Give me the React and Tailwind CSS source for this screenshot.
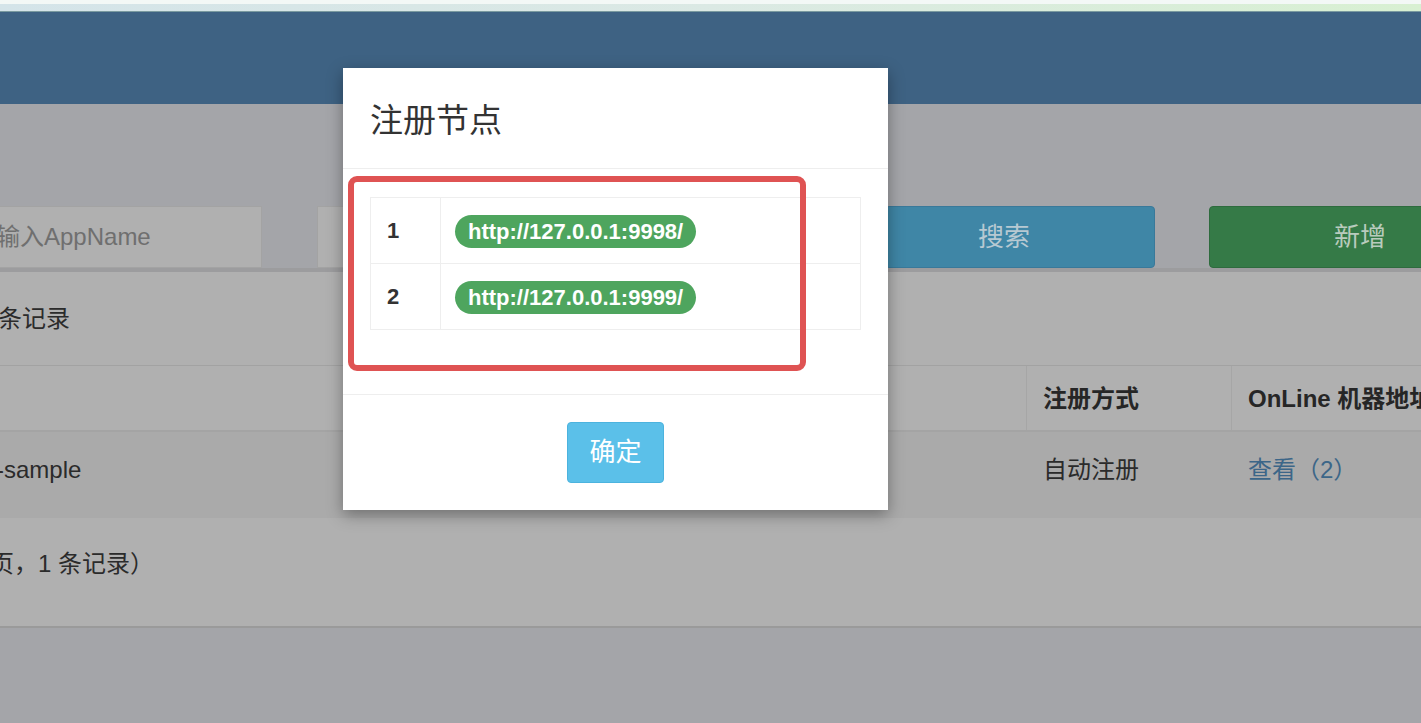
import React from "react";

const FONT = { fontFamily: '"Liberation Sans", "Noto Sans CJK SC", sans-serif' };

const nodes = [
  { id: 1, url: "http://127.0.0.1:9998/" },
  { id: 2, url: "http://127.0.0.1:9999/" },
];

const RegistryModal = () => (
  <div className="absolute left-[343px] top-[68px] w-[545px] h-[442px] bg-white shadow-[0_5px_15px_rgba(0,0,0,0.35)] flex flex-col">
    {/* header */}
    <div className="h-[101px] border-b border-[#eeeeee] flex items-center px-[27px]">
      <h4 className="text-[33px] text-[#333333] font-normal leading-none mt-[4px]">注册节点</h4>
    </div>

    {/* body */}
    <div className="h-[226px] px-[27px] pt-[28px] border-b border-[#eeeeee]">
      <table className="w-[491px] border-collapse border border-[#eeeeee]">
        <tbody>
          {nodes.map((n) => (
            <tr key={n.id} className="h-[66px]">
              <td className="w-[70px] border border-[#eeeeee] pl-[16px] text-[22px] font-bold text-[#333333]">
                {n.id}
              </td>
              <td className="border border-[#eeeeee] pl-[14px]">
                <span className="inline-flex items-center h-[33px] mt-[2px] px-[13px] rounded-full bg-[#4ea55e] text-white text-[22px] font-bold">
                  {n.url}
                </span>
              </td>
            </tr>
          ))}
        </tbody>
      </table>
    </div>

    {/* footer */}
    <div className="flex-1 flex justify-center pt-[27px]">
      <button className="w-[97px] h-[61px] rounded-[4px] bg-[#5bc0e9] border border-[#4cb3de] text-white text-[26px]">
        确定
      </button>
    </div>

    {/* red highlight drawn on the screenshot */}
    <div className="absolute left-[5px] top-[108px] w-[458px] h-[195px] border-[6px] border-[#df5353] rounded-[9px]" />
  </div>
);

export default function App() {
  return (
    <div className="relative w-[1421px] h-[723px] overflow-hidden bg-[#a4a5a9]" style={FONT}>
      {/* top strip */}
      <div className="h-[12px] bg-gradient-to-r from-[#d4e4e9] via-[#dbe9e4] to-[#d8f0d2] border-t-[4px] border-[#f3f8f6] border-b border-b-[#7a9aa0]" />

      {/* header */}
      <div className="h-[92px] bg-[#3e6283]" />

      {/* search row */}
      <div className="flex items-start pt-[102px] h-[164px]">
        <div className="shrink-0 w-[262px] h-[62px] bg-[#b0b0b0] border border-[#a3a3a3] border-l-0 flex items-center overflow-hidden">
          <span className="ml-[-4px] text-[24px] text-[#6f6f6f] whitespace-nowrap">输入AppName</span>
        </div>
        <div className="shrink-0 ml-[55px] w-[300px] h-[62px] bg-[#b0b0b0] border border-[#a3a3a3]" />
        <div className="shrink-0 ml-[268px] w-[270px] h-[62px] bg-[#3f86a6] border border-[#39799a] rounded-[4px] flex items-center pl-[92px] text-[26px] text-[#b7c9d2]">
          搜索
        </div>
        <div className="shrink-0 ml-[54px] w-[300px] h-[62px] bg-[#357a47] border border-[#2e6b3e] rounded-[4px] flex items-center pl-[124px] text-[26px] text-[#b9cbbd]">
          新增
        </div>
      </div>

      {/* box */}
      <div className="h-[360px] bg-[#b0b0b0] border-t-[4px] border-[#9c9c9e] border-b-[2px] border-b-[#9a9a9a] flex flex-col">
        <div className="h-[94px] border-b border-[#a2a2a2] flex items-center">
          <span className="text-[24px] text-[#2b2b2b] ml-[-2px] mt-[1px]">条记录</span>
        </div>

        {/* table header */}
        <div className="h-[66px] flex border-b-[2px] border-[#a4a4a4]">
          <div className="shrink-0 w-[1027px] border-r border-[#a6a6a6]" />
          <div className="shrink-0 w-[205px] border-r border-[#a6a6a6] flex items-center pl-[16px] pt-[2px] text-[24px] font-bold text-[#262626]">
            注册方式
          </div>
          <div className="flex-1 flex items-center pl-[16px] pt-[2px] text-[24px] font-bold text-[#262626] whitespace-nowrap overflow-hidden">
            OnLine 机器地址
          </div>
        </div>

        {/* data row */}
        <div className="h-[86px] flex bg-[#aaaaaa] text-[24px] text-[#2b2b2b] pb-[10px]">
          <div className="shrink-0 w-[1027px] flex items-center">
            <span className="ml-[-4px]">-sample</span>
          </div>
          <div className="shrink-0 w-[205px] flex items-center pl-[16px]">自动注册</div>
          <div className="flex-1 flex items-center pl-[16px] text-[#3c6688] whitespace-nowrap">查看（2）</div>
        </div>

        {/* pagination text */}
        <div className="flex-1 flex items-center pb-[16px]">
          <span className="ml-[-10px] text-[24px] text-[#2b2b2b] whitespace-nowrap">页，1 条记录）</span>
        </div>
      </div>

      <RegistryModal />
    </div>
  );
}
